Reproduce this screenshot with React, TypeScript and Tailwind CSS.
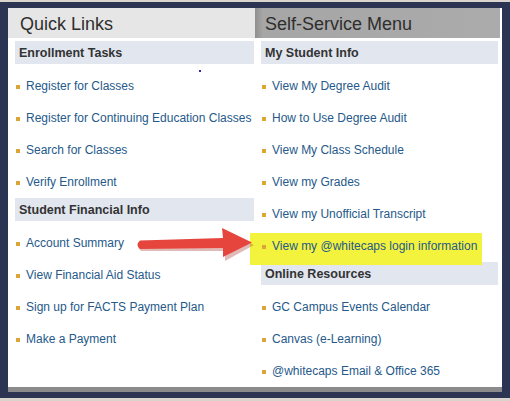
import React from "react";

const font = { fontFamily: '"Liberation Sans", Arial, sans-serif' };

function Bar({ children }: { children: React.ReactNode }) {
  return (
    <div className="h-[23px] bg-[#e1e6ef] pl-[4px] pt-[2px] flex items-center text-[12.5px] font-bold text-[#333333]">
      {children}
    </div>
  );
}

function Item({ children, highlight }: { children: React.ReactNode; highlight?: boolean }) {
  return (
    <div className="relative h-[32px] flex items-center pl-[1px]">
      {highlight && (
        <div className="absolute left-[-11px] top-[4px] w-[232px] h-[32px] bg-[#f3f33d]" />
      )}
      <span className="relative w-[4px] h-[4px] bg-[#dba637] mt-[3px]" />
      <span className="relative ml-[6px] pt-[2px] text-[12px] text-[#25598a]">{children}</span>
    </div>
  );
}

export default function App() {
  return (
    <div className="w-[510px] h-[401px] bg-[#d9d5cd] pt-[2px] relative" style={font}>
      <div className="h-[396px] bg-[#2b3452] pt-[6px] px-[8px]">
        <div className="h-[384px] bg-white border-b-[5px] border-[#8b8b8b] flex">
          {/* Left column */}
          <div className="w-[247px] flex flex-col">
            <div className="h-[30px] bg-[#e6e6e6] pl-[12px] pt-[2px] flex items-center text-[18px] text-[#2e2e2e]">
              Quick Links
            </div>
            <div className="pl-[7px] pr-[1px] pt-[3px]">
              <Bar>Enrollment Tasks</Bar>
              <div className="mt-[5px]">
                <Item>Register for Classes</Item>
                <Item>Register for Continuing Education Classes</Item>
                <Item>Search for Classes</Item>
                <Item>Verify Enrollment</Item>
              </div>
              <div className="mt-[1px]">
                <Bar>Student Financial Info</Bar>
              </div>
              <div className="mt-[5px]">
                <Item>Account Summary</Item>
                <Item>View Financial Aid Status</Item>
                <Item>Sign up for FACTS Payment Plan</Item>
                <Item>Make a Payment</Item>
              </div>
            </div>
          </div>
          {/* Right column */}
          <div className="w-[247px] flex flex-col">
            <div className="h-[30px] mr-[2px] bg-[linear-gradient(to_right,#8f8f8f_0px,#a6a6a6_8px,#ababab_100%)] pl-[10px] pt-[2px] flex items-center text-[18px] text-[#2e2e2e]">
              Self-Service Menu
            </div>
            <div className="pl-[6px] pr-[4px] pt-[3px]">
              <Bar>My Student Info</Bar>
              <div className="mt-[5px]">
                <Item>View My Degree Audit</Item>
                <Item>How to Use Degree Audit</Item>
                <Item>View My Class Schedule</Item>
                <Item>View my Grades</Item>
                <Item>View my Unofficial Transcript</Item>
                <Item highlight>View my @whitecaps login information</Item>
              </div>
              <div className="mt-[1px]">
                <Bar>Online Resources</Bar>
              </div>
              <div className="mt-[5px]">
                <Item>GC Campus Events Calendar</Item>
                <Item>Canvas (e-Learning)</Item>
                <Item>@whitecaps Email &amp; Office 365</Item>
              </div>
            </div>
          </div>
        </div>
      </div>
      <div className="absolute left-[199px] top-[70px] w-[2px] h-[2px] bg-[#3b2a9a]" />
      <svg className="absolute left-0 top-0" width="510" height="401" viewBox="0 0 510 401">
        <path
          d="M140 241 L224 239 L223 228 L253 243 L224 259 L224 249 L140 249 Q135 245 140 241 Z"
          fill="#a83a33"
          opacity="0.35"
          transform="translate(1,2)"
        />
        <path
          d="M140 240.5 L223 238 L222 228 L252 242.5 L223 257 L223 248 L140 249 Q135 245 140 240.5 Z"
          fill="#e5453d"
        />
      </svg>
    </div>
  );
}
